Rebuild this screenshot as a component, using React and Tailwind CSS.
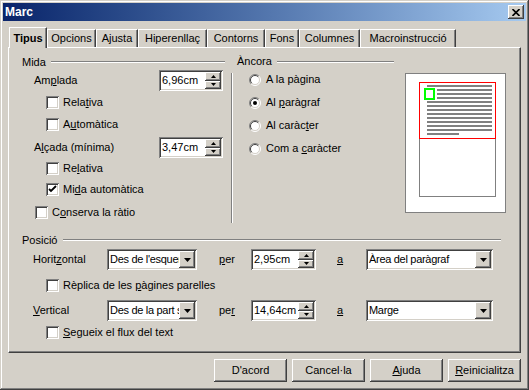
// "Marc" frame dialog, Windows classic look.

const RAISED =
  "bg-[#d4d0c8] shadow-[inset_-1px_-1px_#404040,inset_1px_1px_#ffffff,inset_-2px_-2px_#808080,inset_2px_2px_#d4d0c8]";
const SUNKEN =
  "bg-white shadow-[inset_1px_1px_#808080,inset_-1px_-1px_#ffffff,inset_2px_2px_#404040,inset_-2px_-2px_#d4d0c8]";

function U({ children }) {
  return <span className="underline decoration-1 underline-offset-[1px]">{children}</span>;
}

function Etched({ className = "" }) {
  return <div className={`h-0 border-t border-t-[#808080] border-b border-b-white ${className}`} />;
}

function Heading({ label, gap = "ml-[5px]" }) {
  return (
    <div className="h-[14px] flex items-center">
      <span>{label}</span>
      <Etched className={`flex-1 ${gap}`} />
    </div>
  );
}

function Checkbox({ checked = false }) {
  return (
    <span className={`w-[13px] h-[13px] shrink-0 flex items-center justify-center ${SUNKEN}`}>
      {checked ? (
        <svg width="13" height="13" viewBox="0 0 13 13">
          <path d="M3 6 L5 8 L10 3" fill="none" stroke="#000" strokeWidth="1.8" />
        </svg>
      ) : null}
    </span>
  );
}

function Radio({ checked = false }) {
  return (
    <svg width="12" height="12" viewBox="0 0 12 12" className="shrink-0">
      <circle cx="6" cy="6" r="5" fill="#fff" />
      <path d="M2.1 9.9 A5.5 5.5 0 0 1 9.9 2.1" fill="none" stroke="#808080" />
      <path d="M9.9 2.1 A5.5 5.5 0 0 1 2.1 9.9" fill="none" stroke="#ffffff" />
      <path d="M2.8 9.2 A4.5 4.5 0 0 1 9.2 2.8" fill="none" stroke="#404040" />
      <path d="M9.2 2.8 A4.5 4.5 0 0 1 2.8 9.2" fill="none" stroke="#d4d0c8" />
      {checked ? <circle cx="6" cy="6" r="2" fill="#000" /> : null}
    </svg>
  );
}

function CheckRow({ checked, indent = "pl-[24px]", h = "h-[22px]", children }) {
  return (
    <div className={`${h} ${indent} flex items-center gap-[4px]`}>
      <Checkbox checked={checked} />
      <span>{children}</span>
    </div>
  );
}

function RadioRow({ checked, children }) {
  return (
    <div className="h-[23px] pl-[12px] flex items-center gap-[5px]">
      <Radio checked={checked} />
      <span>{children}</span>
    </div>
  );
}

function Spin({ value, w = "w-[64px]" }) {
  return (
    <div className={`${w} h-[21px] p-[2px] flex ${SUNKEN}`}>
      <span className="flex-1 pl-[1px] flex items-center">{value}</span>
      <div className="w-[16px] flex flex-col">
        <span className={`flex-1 flex items-center justify-center ${RAISED}`}>
          <svg width="5" height="3" viewBox="0 0 5 3">
            <polygon points="0,3 5,3 2.5,0" fill="#000" />
          </svg>
        </span>
        <span className={`flex-1 flex items-center justify-center ${RAISED}`}>
          <svg width="5" height="3" viewBox="0 0 5 3">
            <polygon points="0,0 5,0 2.5,3" fill="#000" />
          </svg>
        </span>
      </div>
    </div>
  );
}

function Combo({ value, w }) {
  return (
    <div className={`${w} h-[21px] p-[2px] flex ${SUNKEN}`}>
      <span className="flex-1 min-w-0 overflow-hidden whitespace-nowrap tracking-[-0.3px] pl-[1px] flex items-center">
        {value}
      </span>
      <span className={`w-[16px] shrink-0 flex items-center justify-center ${RAISED}`}>
        <svg width="7" height="4" viewBox="0 0 7 4">
          <polygon points="0,0 7,0 3.5,4" fill="#000" />
        </svg>
      </span>
    </div>
  );
}

function Preview() {
  const lines = Array.from({ length: 13 }, (_, i) => ({
    y: 12 + i * 4,
    x1: i >= 1 && i <= 3 ? 32 : 22,
    x2: i === 12 ? 54 : 87,
  }));
  return (
    <svg width="101" height="140" viewBox="0 0 101 140" className="shrink-0">
      <rect x="0.5" y="0.5" width="100" height="139" fill="#fff" stroke="#808080" />
      <rect x="14.5" y="9.5" width="76" height="114" fill="#fff" stroke="#808080" />
      {lines.map((l) => (
        <rect key={l.y} x={l.x1} y={l.y} width={l.x2 - l.x1} height="2" fill="#808080" />
      ))}
      <rect x="14.5" y="9.5" width="76" height="56" fill="none" stroke="#ff0000" />
      <rect x="20" y="16" width="9" height="10" fill="#fff" stroke="#00ff00" strokeWidth="2" />
    </svg>
  );
}

const TABS = [
  ["Opcions", "w-[49px]"],
  ["Ajusta", "w-[42px]"],
  ["Hiperenllaç", "w-[69px]"],
  ["Contorns", "w-[58px]"],
  ["Fons", "w-[34px]"],
  ["Columnes", "w-[61px]"],
  ["Macroinstrucció", "w-[96px]"],
];

export default function App() {
  return (
    <div className="w-[529px] h-[390px] bg-[#d4d0c8] p-[3px] flex flex-col text-[11px] leading-none text-black font-['Liberation_Sans',Arial,sans-serif] shadow-[inset_-1px_-1px_#404040,inset_1px_1px_#d4d0c8,inset_-2px_-2px_#808080,inset_2px_2px_#ffffff]">
      {/* title bar */}
      <div className="h-[18px] shrink-0 flex items-center justify-between pl-[2px] pr-[2px] bg-linear-to-r from-[#0a246a] to-[#a6caf0]">
        <span className="text-white font-bold text-[12px]">Marc</span>
        <span className={`w-[16px] h-[14px] flex items-center justify-center ${RAISED}`}>
          <svg width="8" height="7" viewBox="0 0 8 7">
            <path d="M0.5 0 L7.5 7 M7.5 0 L0.5 7" stroke="#000" strokeWidth="1.6" />
          </svg>
        </span>
      </div>

      <div className="px-[5px] flex flex-col">
        {/* tabs */}
        <div className="mt-[6px] h-[20px] pl-[1px] flex items-end">
          <div className="relative z-10 w-[38px] h-[21px] -mb-[1px] bg-[#d4d0c8] border-t border-l border-white border-r border-r-[#404040] shadow-[inset_-1px_0_#808080] flex items-center justify-center font-bold">
            Tipus
          </div>
          {TABS.map(([label, w]) => (
            <div
              key={label}
              className={`${w} h-[18px] border-t border-l border-white border-r border-r-[#404040] shadow-[inset_-1px_0_#808080] flex items-center justify-center`}
            >
              {label}
            </div>
          ))}
        </div>

        {/* panel */}
        <div className="h-[306px] border-t border-l border-white border-r border-b border-r-[#404040] border-b-[#404040] shadow-[inset_-1px_-1px_#808080] pl-[13px] pt-[7px] flex flex-col">
          <div className="flex items-start">
            {/* Mida */}
            <div className="w-[203px] flex flex-col">
              <Heading label="Mida" />
              <div className="mt-[1px] h-[21px] pl-[12px] flex items-center">
                <span className="w-[125px]">
                  Am<U>p</U>lada
                </span>
                <Spin value="6,96cm" />
              </div>
              <CheckRow>
                Rela<U>t</U>iva
              </CheckRow>
              <CheckRow>
                A<U>u</U>tomàtica
              </CheckRow>
              <div className="mt-[2px] h-[21px] pl-[12px] flex items-center">
                <span className="w-[125px]">
                  A<U>l</U>çada (mínima)
                </span>
                <Spin value="3,47cm" />
              </div>
              <CheckRow h="h-[21px]">
                Re<U>l</U>ativa
              </CheckRow>
              <CheckRow h="h-[21px]" checked>
                Mi<U>d</U>a automàtica
              </CheckRow>
              <CheckRow h="h-[24px]" indent="pl-[13px]">
                C<U>o</U>nserva la ràtio
              </CheckRow>
            </div>

            <div className="ml-[6px] mt-[18px] w-[2px] h-[150px] border-l border-l-[#808080] border-r border-r-white" />

            {/* Àncora */}
            <div className="ml-[4px] w-[157px] flex flex-col">
              <div className="h-[13px] flex items-center">
                <span>Àncora</span>
                <Etched className="flex-1 ml-[5px]" />
              </div>
              <RadioRow>A la pàgina</RadioRow>
              <RadioRow checked>
                Al <U>p</U>aràgraf
              </RadioRow>
              <RadioRow>
                Al caràc<U>t</U>er
              </RadioRow>
              <RadioRow>
                Com a <U>c</U>aràcter
              </RadioRow>
            </div>

            <div className="ml-[11px] mt-[18px]">
              <Preview />
            </div>
          </div>

          {/* Posició */}
          <div className="mt-[9px] w-[479px] flex flex-col">
            <Heading label="Posició" gap="ml-[6px]" />
            <div className="mt-[2px] h-[21px] pl-[11px] flex items-center">
              <span className="w-[74px]">
                Horit<U>z</U>ontal
              </span>
              <Combo value="Des de l'esquerra" w="w-[90px]" />
              <span className="ml-[22px] w-[32px]">
                <U>p</U>er
              </span>
              <Spin value="2,95cm" w="w-[65px]" />
              <span className="ml-[21px] w-[29px]">
                <U>a</U>
              </span>
              <Combo value="Àrea del paràgraf" w="w-[127px]" />
            </div>
            <div className="mt-[4px]">
              <CheckRow>
                Rèplica de les <U>p</U>àgines parelles
              </CheckRow>
            </div>
            <div className="mt-[4px] h-[21px] pl-[11px] flex items-center">
              <span className="w-[74px]">
                <U>V</U>ertical
              </span>
              <Combo value="Des de la part superior" w="w-[90px]" />
              <span className="ml-[22px] w-[32px]">
                pe<U>r</U>
              </span>
              <Spin value="14,64cm" w="w-[65px]" />
              <span className="ml-[21px] w-[29px]">
                <U>a</U>
              </span>
              <Combo value="Marge" w="w-[127px]" />
            </div>
            <CheckRow>
              <U>S</U>egueix el flux del text
            </CheckRow>
          </div>
        </div>

        {/* buttons */}
        <div className="mt-[6px] flex justify-end gap-[5px]">
          {[
            ["D'acord", null],
            ["Cancel·la", null],
            ["juda", "A"],
            ["einicialitza", "R"],
          ].map(([rest, key]) => (
            <button key={rest} type="button" className={`w-[73px] h-[23px] flex items-center justify-center ${RAISED}`}>
              {key ? <U>{key}</U> : null}
              {rest}
            </button>
          ))}
        </div>
      </div>
    </div>
  );
}
